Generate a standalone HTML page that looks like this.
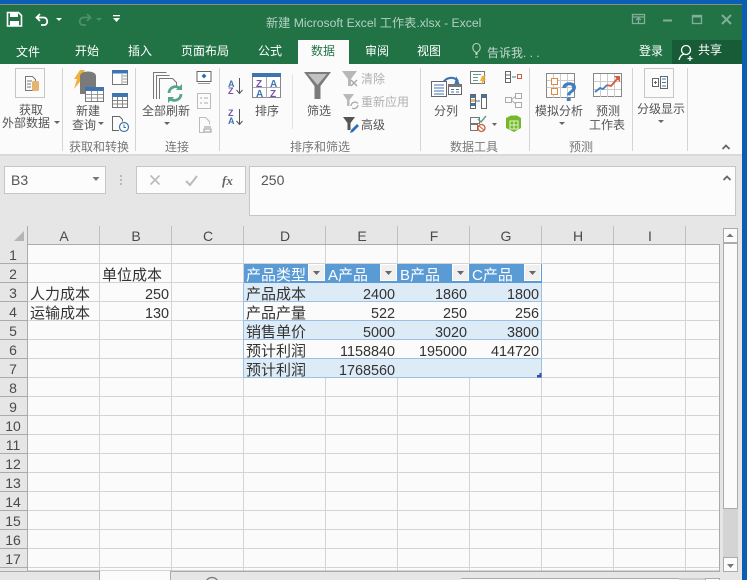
<!DOCTYPE html>
<html><head><meta charset="utf-8">
<style>
html,body{margin:0;padding:0;width:747px;height:580px;overflow:hidden;background:#0a5fb4}
svg{display:block;position:absolute;left:0;top:0}
text{font-family:"Liberation Sans","Noto Sans CJK SC",sans-serif;white-space:pre}
.t{font-size:12px;fill:#fff}
.r{font-size:12px;fill:#555}
.g{font-size:12px;fill:#777}
.d{font-size:12px;fill:#b0b0b0}
.c{font-size:14.4px;fill:#333}
.j{font-size:15px;fill:#333}
.n{text-anchor:end}
.h{font-size:14px;fill:#4a4a4a;text-anchor:middle}
.w{fill:#fff}
</style></head><body>
<svg width="747" height="580" viewBox="0 0 747 580" xmlns="http://www.w3.org/2000/svg">
<rect width="747" height="580" fill="#0a5fb4"/>
<rect x="0" y="4" width="742" height="1" fill="#8a8a8a"/>
<rect x="0" y="5" width="742" height="59" fill="#217346"/>
<rect x="0" y="64" width="742" height="91" fill="#fbfbfb"/>
<rect x="0" y="155" width="742" height="425" fill="#e6e6e6"/>
<rect x="0" y="154" width="742" height="2" fill="#dadada"/>

<!-- QAT -->
<path d="M7.500 12.500h11l3 3v10.500h-14z" fill="none" stroke="#fff" stroke-width="1.600"/>
<rect x="10" y="13" width="8" height="4" fill="#fff"/><rect x="10" y="21" width="9" height="5" fill="#fff"/>
<path d="M40 14l-3.500 3.500 3.500 3.500M37 17.500h7a4 4 0 0 1 1 7.500h-4" fill="none" stroke="#fff" stroke-width="1.800"/>
<path d="M56 18h6l-3 3z" fill="#fff"/>
<path d="M87 14l3.500 3.500-3.500 3.500M90 17.500h-7a4 4 0 0 0-1 7.500h4" fill="none" stroke="#4f8e6c" stroke-width="1.800"/>
<path d="M96 18h6l-3 3z" fill="#4f8e6c"/>
<rect x="113" y="15" width="7" height="1.300" fill="#fff"/><path d="M113 18h7l-3.500 4z" fill="#fff"/>

<text x="266" y="27" style="font-size:12.2px;fill:#b5d0c1">新建 Microsoft Excel 工作表.xlsx - Excel</text>

<!-- window controls -->
<g fill="none" stroke="#83ae97" stroke-width="1.300">
<rect x="632.500" y="14.500" width="12" height="9"/><path d="M633 17h11M638.500 23v-4M636 20l2.500-2 2.500 2"/>
<path d="M663 20.500h9" stroke-width="2"/>
<rect x="692.500" y="15.500" width="9" height="8"/><path d="M692 16.500h10" stroke-width="2"/>
<path d="M722 15l9 9M731 15l-9 9" stroke-width="2"/>
</g>

<!-- tabs -->
<rect x="298" y="40" width="51" height="25" fill="#fbfbfb"/>
<rect x="672" y="40" width="70" height="24" fill="#185c37"/>
<text class="t" x="16" y="56">文件</text>
<text class="t" x="75" y="55">开始</text>
<text class="t" x="128" y="55">插入</text>
<text class="t" x="181" y="55">页面布局</text>
<text class="t" x="258" y="55">公式</text>
<text x="311" y="55" style="font-size:12px;fill:#217346">数据</text>
<text class="t" x="365" y="55">审阅</text>
<text class="t" x="417" y="55">视图</text>
<path d="M476 54.500v-2c-5-3-3.500-9 .5-9s5.500 6 .5 9v2z M475 57h3" fill="none" stroke="#bcd3c6" stroke-width="1.100"/>
<text x="487" y="57" style="font-size:12px;fill:#c5d8cd">告诉我. . .</text>
<text class="t" x="639" y="55">登录</text>
<text class="t" x="698" y="54">共享</text>
<circle cx="686" cy="50" r="4.500" fill="none" stroke="#fff" stroke-width="1.300"/>
<path d="M679 60c1-4 3-5.500 5-6M690 56v5M687.500 58.500h5" fill="none" stroke="#fff" stroke-width="1.300"/>

<!-- separators -->
<g fill="#d4d4d4">
<rect x="62" y="68" width="1" height="83"/><rect x="135" y="68" width="1" height="83"/>
<rect x="219" y="68" width="1" height="83"/><rect x="420" y="68" width="1" height="83"/>
<rect x="529" y="68" width="1" height="83"/><rect x="632" y="68" width="1" height="83"/>
<rect x="687" y="68" width="1" height="83"/><rect x="292" y="74" width="1" height="55" fill="#e2e2e2"/>
</g>

<!-- ribbon labels -->
<text class="r" x="19" y="114">获取</text>
<text class="r" x="2" y="127">外部数据</text>
<text class="r" x="76" y="115">新建</text>
<text class="r" x="72" y="129">查询</text>
<text class="r" x="142" y="115">全部刷新</text>
<text class="r" x="255" y="115">排序</text>
<text class="r" x="307" y="115">筛选</text>
<text class="d" x="361" y="83">清除</text>
<text class="d" x="361" y="106">重新应用</text>
<text class="r" x="361" y="129">高级</text>
<text class="r" x="434" y="115">分列</text>
<text class="r" x="535" y="115">模拟分析</text>
<text class="r" x="596" y="115">预测</text>
<text class="r" x="589" y="129">工作表</text>
<text class="r" x="637" y="113">分级显示</text>
<text class="g" x="69" y="151">获取和转换</text>
<text class="g" x="165" y="151">连接</text>
<text class="g" x="290" y="151">排序和筛选</text>
<text class="g" x="450" y="151">数据工具</text>
<text class="g" x="569" y="151">预测</text>
<g fill="#666">
<path d="M54 121h6l-3 3z"/><path d="M98 122h6l-3 3z"/><path d="M164 122h6l-3 3z"/>
<path d="M492 123h5l-2.500 3z"/><path d="M559 122h6l-3 3z"/><path d="M658 120h6l-3 3z"/>
</g>
<path d="M722.500 149l3.500-3.500 3.500 3.500" fill="none" stroke="#666" stroke-width="1.800"/>

<!-- get external data -->
<rect x="15.500" y="68.500" width="29" height="29" fill="#fbfbfb" stroke="#c6c6c6"/>
<path d="M25.500 76.500h7l3 3v11h-10z" fill="#fbfbfb" stroke="#777"/>
<path d="M27 81h5M27 84h4M27 87h4" stroke="#777"/>
<rect x="32" y="81" width="7" height="10" rx="1.500" fill="#e3b56e"/>
<!-- new query -->
<path d="M80 70h5l-5 8h3l-9 11 3-10h-3z" fill="#eeb13c"/>
<path d="M80 76c0-6 16-6 16 0v18H80z" fill="#7a7a7a"/>
<rect x="85.500" y="87.500" width="18" height="14" fill="#fff" stroke="#777"/>
<rect x="85" y="87" width="19" height="4" fill="#3f74b0"/>
<path d="M91.500 91v10M97.500 91v10M86 94.500h17M86 98h17" stroke="#999"/>
<rect x="112.500" y="70.500" width="15" height="14" fill="#fff" stroke="#777"/><rect x="112" y="70" width="16" height="3.500" fill="#3f74b0"/>
<path d="M122 74v10M123 76h4M123 79h4M123 82h4" stroke="#999"/>
<rect x="112.500" y="93.500" width="15" height="14" fill="#fff" stroke="#777"/><rect x="112" y="93" width="16" height="4" fill="#3f74b0"/>
<path d="M117.500 97v10M122.500 97v10M113 100.500h14M113 104h14" stroke="#888"/>
<path d="M119 130.500h-6.500v-14h7l3 3v2" fill="none" stroke="#666"/>
<circle cx="124" cy="127" r="4.500" fill="#fff" stroke="#3f74b0" stroke-width="1.200"/><path d="M124 124.500v3h2" fill="none" stroke="#3f74b0"/>
<!-- refresh all -->
<path d="M153.500 99V72.500h13M156.500 99V75.500h13M159.500 99V78.500h13l4 4v4" fill="none" stroke="#777"/>
<path d="M169 93a6.500 6.500 0 0 1 11-4.500M181 94a6.500 6.500 0 0 1-11 4.500" fill="none" stroke="#5aa58a" stroke-width="2.800"/>
<path d="M182 84v6h-6zM168 103v-6h6z" fill="#5aa58a"/>
<rect x="197" y="71.500" width="14" height="10" fill="#fff" stroke="#666"/><path d="M198 83.500h12" stroke="#999"/><path d="M204 73.500l2.500 2.500-2.500 2.500-2.500-2.500z" fill="#2f6fb5"/>
<rect x="197.500" y="93.500" width="13" height="15" fill="#fbfbfb" stroke="#bbb"/><path d="M200 98h2M204 98h4M200 103h2M204 103h4" stroke="#aaa"/>
<path d="M204 132.500h-4.500v-15h6l4 4v3" fill="none" stroke="#bbb"/><path d="M204 129h7v3h-7zM204 127h7" fill="none" stroke="#aaa" stroke-width="1.200"/>
<!-- az sort -->
<text x="228" y="87" style="font-size:9px;font-weight:bold;fill:#3f74b0">A</text><text x="228" y="94" style="font-size:9px;font-weight:bold;fill:#7b4fa8">Z</text>
<path d="M239.500 78v15M236.500 90l3 3.500 3-3.500" fill="none" stroke="#555"/>
<text x="228" y="116" style="font-size:9px;font-weight:bold;fill:#7b4fa8">Z</text><text x="228" y="124" style="font-size:9px;font-weight:bold;fill:#3f74b0">A</text>
<path d="M239.500 109v15M236.500 121l3 3.500 3-3.500" fill="none" stroke="#555"/>
<rect x="252.500" y="73.500" width="28" height="24" fill="#fff" stroke="#888"/>
<rect x="252" y="73" width="29" height="4" fill="#3f74b0"/><path d="M266.500 77v21M253 87.500h27" stroke="#aaa"/>
<text x="256" y="87" style="font-size:10px;font-weight:bold;fill:#7b4fa8">Z</text><text x="256" y="97" style="font-size:10px;font-weight:bold;fill:#3f74b0">A</text>
<text x="270" y="87" style="font-size:10px;font-weight:bold;fill:#3f74b0">A</text><text x="270" y="97" style="font-size:10px;font-weight:bold;fill:#7b4fa8">Z</text>
<!-- filter -->
<path d="M304 72h27l-10.500 14v13h-6V86z" fill="#7b7b7b"/><path d="M308 74h19l-9.500 11z" fill="#c2c2c2"/>
<path d="M342 71h15l-6 8v7h-3v-7z" fill="#b8b8b8"/><path d="M351 80l6 6M357 80l-6 6" stroke="#aaa" stroke-width="1.500"/>
<path d="M343 94h11l-4.500 6v6h-2.500v-6z" fill="#b8b8b8"/><path d="M351 106a4 4 0 0 1 7-2.500M358 105a4 4 0 0 1-6 3" fill="none" stroke="#aaa" stroke-width="1.300"/>
<path d="M343 117h12l-4.500 6v7h-3v-7z" fill="#555"/><path d="M350 133l1-3 6-6 2 2-6 6z" fill="#2f6fb5"/>
<!-- text to columns -->
<path d="M443 83a9 9 0 0 1 15-2" fill="none" stroke="#3f74b0" stroke-width="2.200"/><path d="M455 77v9h7z" fill="#3f74b0" transform="rotate(15 458 82)"/>
<rect x="431.500" y="81.500" width="15" height="15" fill="#fff" stroke="#666"/><path d="M434 85h10M434 88h10M434 91h10M434 94h10" stroke="#3f74b0"/>
<rect x="448.500" y="84.500" width="13" height="10" fill="#fff" stroke="#666"/><rect x="448" y="84" width="14" height="3" fill="#777"/><path d="M451 89.500h3M456 89.500h3M451 92h3M456 92h3" stroke="#3f74b0"/>
<rect x="470.500" y="71.500" width="14" height="12" fill="#fff" stroke="#777"/><path d="M473 74.500h8M473 77.500h5M473 80.500h5" stroke="#5aa58a"/><path d="M482 76l4-1-2 4h2l-5 6 1-4h-2z" fill="#eeb13c"/>
<rect x="470.500" y="94.500" width="5" height="14" fill="#fff" stroke="#666"/><rect x="481.500" y="94.500" width="5" height="14" fill="#fff" stroke="#666"/>
<rect x="471" y="95" width="4" height="3" fill="#3f74b0"/><rect x="471" y="99" width="4" height="3" fill="#e3b56e"/><rect x="471" y="103" width="4" height="3" fill="#3f74b0"/>
<rect x="482" y="95" width="4" height="3" fill="#3f74b0"/><path d="M476 101h4" stroke="#3f74b0"/>
<rect x="470.500" y="117.500" width="9" height="6" fill="none" stroke="#777"/><rect x="470.500" y="124.500" width="7" height="6" fill="none" stroke="#777"/>
<path d="M478 119l3 3 5-6" fill="none" stroke="#5aa58a" stroke-width="1.500"/><circle cx="481.500" cy="128" r="3.500" fill="#fff" stroke="#d05a3c" stroke-width="1.300"/><path d="M479 126l5 4" stroke="#d05a3c"/>
<!-- right tools -->
<rect x="505.500" y="71.500" width="5" height="11" fill="#fff" stroke="#666"/><path d="M506 75h4M506 78.500h4" stroke="#666"/><path d="M512 77h4" stroke="#3f74b0"/><rect x="517.500" y="74.500" width="4" height="4" fill="#fff" stroke="#d05a3c"/>
<g fill="#fbfbfb" stroke="#aaa"><rect x="505.500" y="97.500" width="6" height="5"/><rect x="515.500" y="93.500" width="6" height="5"/><rect x="515.500" y="102.500" width="6" height="5"/></g><path d="M511 100l5-4M511 100l5 4" stroke="#aaa"/>
<path d="M506 118l5-2.500h6l4 2.500v10l-7 4-8-4z" fill="#76b82a"/><path d="M510 121h8v8h-8zM514 121v8M510 125h8" fill="none" stroke="#e3f3d2"/>
<!-- what-if -->
<rect x="546.500" y="73.500" width="28" height="24" fill="#fff" stroke="#888"/><path d="M553.500 74v24M560.500 74v24M567.500 74v24M547 80.500h27M547 87.500h27" stroke="#ccc"/>
<rect x="551.500" y="78.500" width="6" height="6" fill="#fff" stroke="#e08a3c"/><rect x="551.500" y="88.500" width="6" height="6" fill="#fff" stroke="#e08a3c"/>
<text x="561" y="101" style="font-size:27px;font-weight:bold;fill:#3f7fc0">?</text>
<!-- forecast -->
<rect x="593.500" y="73.500" width="28" height="23" fill="#fff" stroke="#888"/><path d="M600.500 74v23M607.500 74v23M614.500 74v23M594 81.500h27M594 89.500h27" stroke="#ccc"/>
<path d="M595 92l5-4 3 1 4-4" fill="none" stroke="#3f7fc0" stroke-width="1.800"/><path d="M607 85l4 1 7-8" fill="none" stroke="#d9593c" stroke-width="1.800"/><path d="M614 76h6v6z" fill="#d9593c"/>
<!-- outline -->
<rect x="644.500" y="68.500" width="29" height="29" fill="#fbfbfb" stroke="#c6c6c6"/>
<rect x="652.500" y="78.500" width="6" height="8" fill="#fff" stroke="#666"/><path d="M654 82.500h3M655.500 81v3" stroke="#666"/>
<rect x="660.500" y="76.500" width="7" height="12" fill="#fff" stroke="#666"/><path d="M662 79h4M662 82.500h4M662 86h4" stroke="#3f74b0"/>

<!-- formula bar -->
<rect x="4.500" y="166.500" width="101" height="27" fill="#fcfcfc" stroke="#c6c6c6"/>
<text x="11" y="185" style="font-size:14px;fill:#555">B3</text>
<path d="M92.500 177h7l-3.500 4z" fill="#777"/>
<path d="M121 175v2M121 179v2M121 183v2" stroke="#aaa" stroke-width="1.500"/>
<rect x="136.500" y="166.500" width="109" height="27" fill="#fcfcfc" stroke="#c6c6c6"/>
<path d="M150.500 175.500l9 9M159.500 175.500l-9 9" stroke="#bbb" stroke-width="1.600"/>
<path d="M186 181l4 4 7-9" fill="none" stroke="#bbb" stroke-width="2"/>
<text x="222" y="185" style="font-family:'Liberation Serif',serif;font-size:13px;font-style:italic;font-weight:bold;fill:#666">fx</text>
<rect x="249.500" y="166.500" width="486" height="49" fill="#fcfcfc" stroke="#c6c6c6"/>
<text x="261" y="185" style="font-size:14px;fill:#555">250</text>
<path d="M723.500 180l3.500-3.500 3.500 3.500" fill="none" stroke="#666" stroke-width="1.800"/>

<!-- grid -->
<rect x="28" y="245" width="691" height="326" fill="#fbfbfb"/>
<g stroke="#d4d4d4" stroke-width="1">
<path d="M99.500 245V571M171.500 245V571M243.500 245V571M325.500 245V571M397.500 245V571M469.500 245V571M541.500 245V571M613.500 245V571M685.500 245V571"/>
<path d="M28 263.500H719M28 282.500H719M28 301.500H719M28 320.500H719M28 339.500H719M28 358.500H719M28 377.500H719M28 396.500H719M28 415.500H719M28 434.500H719M28 453.500H719M28 472.500H719M28 491.500H719M28 510.500H719M28 529.500H719M28 548.500H719M28 567.500H719"/>
</g>
<!-- headers -->
<rect x="0" y="226" width="719" height="19" fill="#e6e6e6"/>
<rect x="0" y="245" width="28" height="326" fill="#e6e6e6"/>
<path d="M28 244.500H719.500V571H27.500V226" fill="none" stroke="#ababab"/>
<path d="M0 263.500h27M0 282.500h27M0 301.500h27M0 320.500h27M0 339.500h27M0 358.500h27M0 377.500h27M0 396.500h27M0 415.500h27M0 434.500h27M0 453.500h27M0 472.500h27M0 491.500h27M0 510.500h27M0 529.500h27M0 548.500h27M0 567.500h27" stroke="#ababab"/>
<path d="M99.500 226v18M171.500 226v18M243.500 226v18M325.500 226v18M397.500 226v18M469.500 226v18M541.500 226v18M613.500 226v18M685.500 226v18" stroke="#c0c0c0"/>
<path d="M24 231v10H14z" fill="#b5b5b5"/>
<text class="h" x="64" y="241">A</text><text class="h" x="136" y="241">B</text><text class="h" x="208" y="241">C</text>
<text class="h" x="285" y="241">D</text><text class="h" x="362" y="241">E</text><text class="h" x="434" y="241">F</text>
<text class="h" x="506" y="241">G</text><text class="h" x="578" y="241">H</text><text class="h" x="650" y="241">I</text>
<text class="h" x="13" y="260">1</text><text class="h" x="13" y="279">2</text><text class="h" x="13" y="298">3</text>
<text class="h" x="13" y="317">4</text><text class="h" x="13" y="336">5</text><text class="h" x="13" y="355">6</text>
<text class="h" x="13" y="374">7</text><text class="h" x="13" y="393">8</text><text class="h" x="13" y="412">9</text>
<text class="h" x="13" y="431">10</text><text class="h" x="13" y="450">11</text><text class="h" x="13" y="469">12</text>
<text class="h" x="13" y="488">13</text><text class="h" x="13" y="507">14</text><text class="h" x="13" y="526">15</text>
<text class="h" x="13" y="545">16</text><text class="h" x="13" y="564">17</text>

<!-- table -->
<rect x="244" y="264" width="298" height="19" fill="#5b9bd5"/>
<rect x="244" y="283" width="298" height="19" fill="#ddebf7"/>
<rect x="244" y="302" width="298" height="19" fill="#fbfbfb"/>
<rect x="244" y="321" width="298" height="19" fill="#ddebf7"/>
<rect x="244" y="340" width="298" height="19" fill="#fbfbfb"/>
<rect x="244" y="359" width="298" height="19" fill="#ddebf7"/>
<path d="M244 301.500H542M244 320.500H542M244 339.500H542M244 358.500H542M244 377.500H542M243.500 283V378M541.500 283V378" stroke="#9bc2e6"/>
<path d="M537 377.500h4.500v-4.500h-2v2h-2.500z" fill="#2f4fa8"/>
<g fill="#f0f0f0" stroke="#fff"><rect x="308.500" y="264.500" width="16" height="16"/><rect x="380.500" y="264.500" width="16" height="16"/><rect x="452.500" y="264.500" width="16" height="16"/><rect x="524.500" y="264.500" width="16" height="16"/></g>
<g fill="#666"><path d="M313 271h7l-3.500 4zM385 271h7l-3.500 4zM457 271h7l-3.500 4zM529 271h7l-3.500 4z"/></g>

<text class="j w" x="246" y="280">产品类型</text>
<text class="j w" x="328" y="280">A产品</text>
<text class="j w" x="400" y="280">B产品</text>
<text class="j w" x="472" y="280">C产品</text>
<text class="j" x="102" y="280">单位成本</text>
<text class="j" x="30" y="299">人力成本</text><text class="c n" x="169" y="299">250</text>
<text class="j" x="30" y="318">运输成本</text><text class="c n" x="169" y="318">130</text>

<text class="j" x="246" y="299">产品成本</text><text class="c n" x="395" y="299">2400</text><text class="c n" x="467" y="299">1860</text><text class="c n" x="539" y="299">1800</text>
<text class="j" x="246" y="318">产品产量</text><text class="c n" x="395" y="318">522</text><text class="c n" x="467" y="318">250</text><text class="c n" x="539" y="318">256</text>
<text class="j" x="246" y="337">销售单价</text><text class="c n" x="395" y="337">5000</text><text class="c n" x="467" y="337">3020</text><text class="c n" x="539" y="337">3800</text>
<text class="j" x="246" y="356">预计利润</text><text class="c n" x="395" y="356">1158840</text><text class="c n" x="467" y="356">195000</text><text class="c n" x="539" y="356">414720</text>
<text class="j" x="246" y="375">预计利润</text><text class="c n" x="395" y="375">1768560</text>

<!-- scrollbar -->
<rect x="723" y="228" width="15" height="343" fill="#d4d4d4"/>
<rect x="723.500" y="228.500" width="14" height="14" fill="#fbfbfb" stroke="#ababab"/>
<path d="M726.500 237l3.500-3.500 3.500 3.500z" fill="#777"/>
<rect x="723.500" y="243.500" width="14" height="265" fill="#fbfbfb" stroke="#ababab"/>
<rect x="723.500" y="557.500" width="14" height="14" fill="#fbfbfb" stroke="#ababab"/>
<path d="M727 564h7l-3.500 4z" fill="#777"/>

<!-- bottom -->
<rect x="0" y="571" width="100" height="9" fill="#e6e6e6"/>
<path d="M0 571.500H99.500V580" fill="none" stroke="#ababab"/>
<rect x="100" y="571" width="70" height="9" fill="#fbfbfb"/>
<path d="M170.500 580V571.500H720" fill="none" stroke="#ababab"/>
<circle cx="212" cy="584" r="6.500" fill="none" stroke="#777" stroke-width="1.300"/>
<rect x="461" y="578" width="218" height="2" fill="#fbfbfb"/><path d="M461 578.500H679" stroke="#ababab"/>
<rect x="679" y="578" width="26" height="2" fill="#cfcfcf"/>
<rect x="705.500" y="578.500" width="14" height="3" fill="#fbfbfb" stroke="#ababab"/>
</svg>
</body></html>
